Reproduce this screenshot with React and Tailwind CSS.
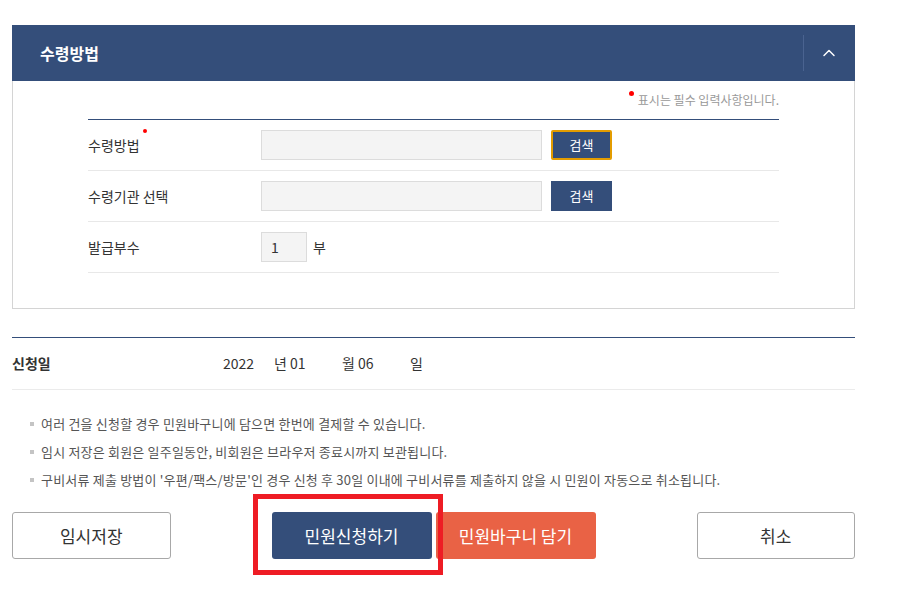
import { ChevronUp } from "lucide-react";

const font = { fontFamily: '"Noto Sans CJK KR", "Noto Sans", sans-serif' };

function Row({ label, required, children }) {
  return (
    <div className="flex h-[51px] items-center border-b border-[#e8e8e8]">
      <div className="w-[173px] text-[14px] text-[#333]">
        <span className="relative">
          {label}
          {required && <span className="absolute -right-[7px] -top-[6px] h-[4px] w-[4px] rounded-full bg-[#ff0000]" />}
        </span>
      </div>
      {children}
    </div>
  );
}

function SearchRow({ focused }) {
  return (
    <div className="flex items-center gap-[9px]">
      <div className="h-[30px] w-[281px] border border-[#dcdcdc] bg-[#f4f4f4]" />
      <button
        className={`flex h-[30px] w-[61px] items-center justify-center bg-[#344e7a] text-[13px] text-white ${focused ? "rounded-[2px] border-2 border-[#e39c00]" : ""}`}
      >
        검색
      </button>
    </div>
  );
}

export default function App() {
  const notes = [
    "여러 건을 신청할 경우 민원바구니에 담으면 한번에 결제할 수 있습니다.",
    "임시 저장은 회원은 일주일동안, 비회원은 브라우저 종료시까지 보관됩니다.",
    "구비서류 제출 방법이 '우편/팩스/방문'인 경우 신청 후 30일 이내에 구비서류를 제출하지 않을 시 민원이 자동으로 취소됩니다.",
  ];
  return (
    <div className="min-h-[590px] w-[922px] bg-white pl-[12px] pt-[25px]" style={font}>
      <div className="w-[843px]">
        <div className="flex h-[56px] items-center bg-[#344e7a]">
          <div className="flex-1 pl-[28px] text-[16px] font-bold text-white">수령방법</div>
          <div className="h-[36px] w-px bg-[#4a6390]" />
          <div className="flex w-[51px] items-center justify-center pr-[2px]">
            <ChevronUp className="h-[20px] w-[20px] text-white" strokeWidth={1.75} />
          </div>
        </div>
        <div className="h-[228px] border-x border-b border-[#d4d4d4] px-[75px]">
          <div className="flex h-[38px] items-center justify-end">
            <span className="relative text-[12px] text-[#999]">
              <span className="absolute -left-[9px] top-[0px] h-[5px] w-[5px] rounded-full bg-[#ff0000]" />
              표시는 필수 입력사항입니다.
            </span>
          </div>
          <div className="border-t border-[#344e7a]">
            <Row label="수령방법" required>
              <SearchRow focused />
            </Row>
            <Row label="수령기관 선택">
              <SearchRow />
            </Row>
            <Row label="발급부수">
              <div className="flex items-center">
                <div className="flex h-[30px] w-[46px] items-center border border-[#dcdcdc] bg-[#f4f4f4] pl-[9px] text-[14px] text-[#333]">1</div>
                <span className="ml-[6px] text-[14px] text-[#333]">부</span>
              </div>
            </Row>
          </div>
        </div>

        <div className="mt-[28px] flex h-[53px] items-center border-y border-t-[#344e7a] border-b-[#ebebeb] text-[14px] text-[#333]">
          <div className="w-[211px] font-bold">신청일</div>
          <div className="w-[51px]">2022</div>
          <div className="w-[68px]">년 01</div>
          <div className="w-[68px]">월 06</div>
          <div>일</div>
        </div>

        <ul className="mt-[25px] flex flex-col gap-[10px] pl-[18px]">
          {notes.map((n) => (
            <li key={n} className="flex h-[18px] items-center text-[13px] tracking-[0.2px] text-[#555]">
              <span className="mr-[7px] h-[4px] w-[4px] shrink-0 bg-[#c4c4c4]" />
              {n}
            </li>
          ))}
        </ul>

        <div className="mt-[23px] flex items-center">
          <button className="h-[47px] w-[159px] rounded-[3px] border border-[#a8a8a8] bg-white text-[17px] text-[#333]">임시저장</button>
          <div className="relative ml-[101px] flex items-center gap-[4px]">
            <button className="h-[47px] w-[160px] rounded-[3px] bg-[#344e7a] text-[17px] text-white">민원신청하기</button>
            <button className="h-[47px] w-[160px] rounded-[3px] bg-[#e96245] text-[17px] text-white">민원바구니 담기</button>
            <div className="pointer-events-none absolute -left-[19px] -top-[18px] h-[81px] w-[190px] border-[5px] border-[#ee1c24]" />
          </div>
          <button className="ml-[101px] h-[47px] w-[159px] rounded-[3px] border border-[#a8a8a8] bg-white text-[17px] text-[#333]">취소</button>
        </div>
      </div>
    </div>
  );
}
